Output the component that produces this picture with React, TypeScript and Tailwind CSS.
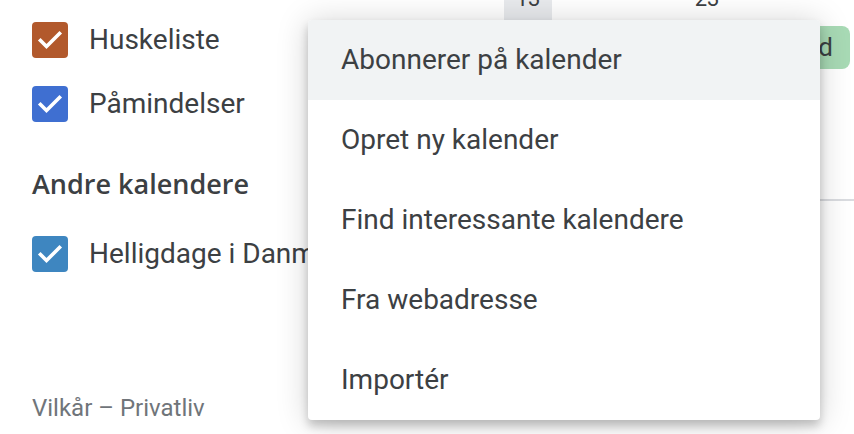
import React from 'react';

type Cal = { name: string; color: string };

const mine: Cal[] = [
  { name: 'Huskeliste', color: 'bg-[#b2592c]' },
  { name: 'Påmindelser', color: 'bg-[#3f6fd1]' },
];

const others: Cal[] = [{ name: 'Helligdage i Danmark', color: 'bg-[#3e86c0]' }];

const menuItems = [
  'Abonnerer på kalender',
  'Opret ny kalender',
  'Find interessante kalendere',
  'Fra webadresse',
  'Importér',
];

function CheckRow({ cal }: { cal: Cal }) {
  return (
    <div className="flex h-16 items-center gap-[21px] whitespace-nowrap">
      <span className={`flex h-9 w-9 shrink-0 items-center justify-center rounded-[4px] ${cal.color}`}>
        <svg width="36" height="36" viewBox="0 0 36 36" fill="none">
          <path d="M8.5 18.5 L14.5 24.5 L27.5 11.5" stroke="white" strokeWidth="3.6" strokeLinecap="square" />
        </svg>
      </span>
      <span className="text-[28px] text-[#3c4043]">{cal.name}</span>
    </div>
  );
}

export default function App() {
  return (
    <div className="relative flex h-[434px] w-[854px] overflow-hidden bg-white font-['Roboto',sans-serif]">
      {/* Venstre sidepanel */}
      <aside className="flex w-[308px] shrink-0 flex-col overflow-hidden pl-8 pt-2">
        {mine.map((c) => (
          <CheckRow key={c.name} cal={c} />
        ))}
        <div className="mt-6 flex h-12 items-center whitespace-nowrap font-['Open_Sans',sans-serif] text-[27px] font-semibold text-[#3c4043]">
          Andre kalendere
        </div>
        <div className="mt-[14px]">
          {others.map((c) => (
            <CheckRow key={c.name} cal={c} />
          ))}
        </div>
        <div className="mt-[104px] whitespace-nowrap text-[24px] text-[#70757a]">Vilkår – Privatliv</div>
      </aside>

      {/* Kalendergitter bag menuen */}
      <main className="flex flex-1 flex-col">
        <div className="flex h-5 overflow-hidden">
          <div className="ml-[196px] flex h-5 w-12 items-end justify-center bg-[#e8eaed]">
            <span className="mb-[10px] text-[22px] leading-[22px] text-[#3c4043]">13</span>
          </div>
          <div className="ml-[131px] flex h-5 w-12 items-end justify-center">
            <span className="mb-[10px] text-[22px] leading-[22px] text-[#3c4043]">23</span>
          </div>
        </div>
        <div className="mt-[6px] flex justify-end pr-1">
          <div className="flex h-[43px] w-[150px] items-center justify-end overflow-hidden whitespace-nowrap rounded-[8px] bg-[#a8dab5] pr-[17px] text-[26px] text-[#3c4043]">
            Ny begivenhed
          </div>
        </div>
        <div className="mt-[130px] h-[2px] bg-[#dadce0]" />
      </main>

      {/* Menu */}
      <div className="absolute left-[308px] top-5 flex h-[400px] w-[512px] flex-col overflow-hidden rounded-[4px] bg-white shadow-[0_6px_10px_rgba(0,0,0,0.2),0_2px_32px_rgba(0,0,0,0.18)]">
        {menuItems.map((item, i) => (
          <div
            key={item}
            className={`flex h-20 items-center px-[33px] text-[28px] text-[#3c4043] ${i === 0 ? 'bg-[#f1f3f4]' : ''}`}
          >
            {item}
          </div>
        ))}
      </div>
    </div>
  );
}
